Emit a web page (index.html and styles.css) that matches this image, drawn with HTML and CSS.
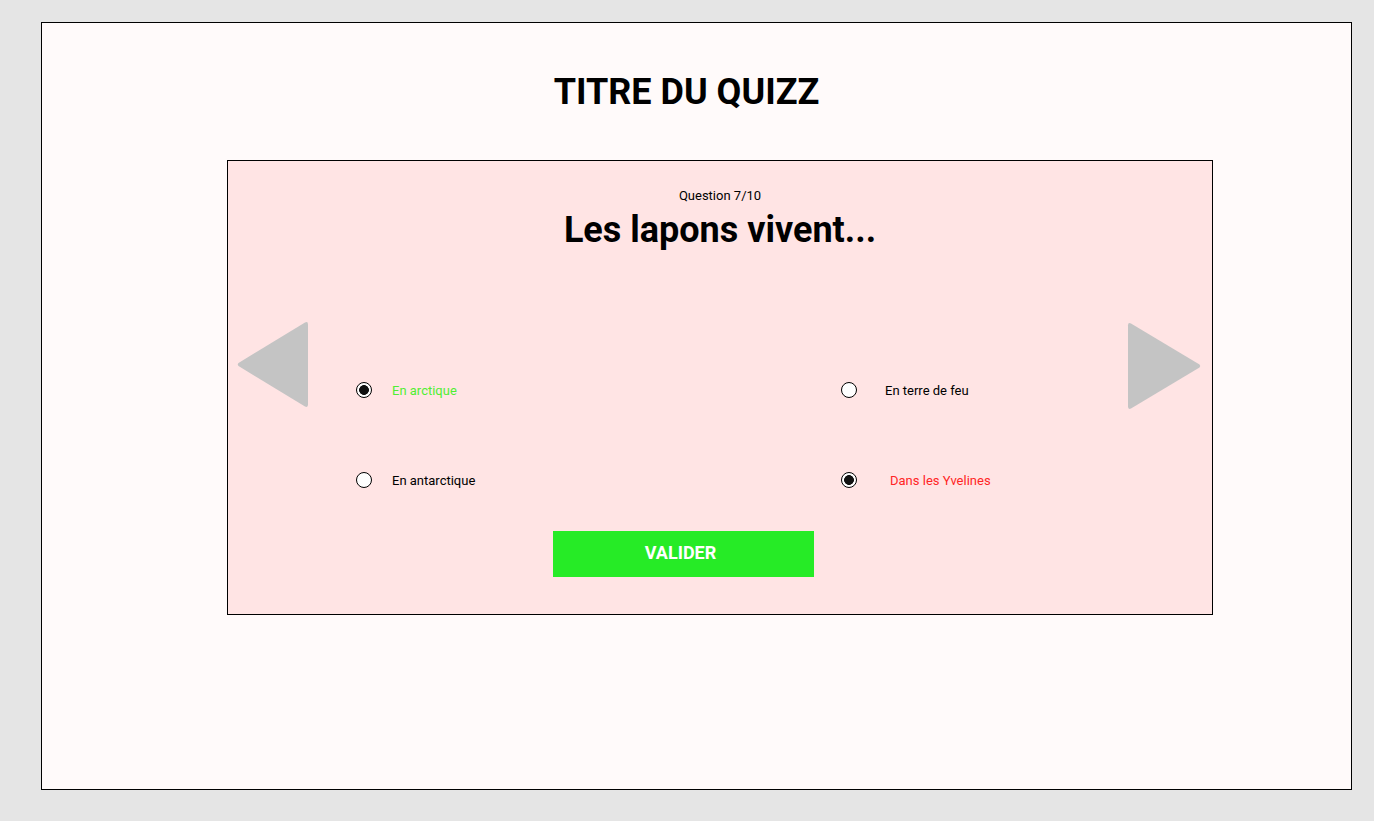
FILE: index.html
```html
<!DOCTYPE html>
<html lang="fr">
<head>
<meta charset="utf-8">
<title>Titre du quizz</title>
<link rel="stylesheet" href="styles.css">
</head>
<body>
<div class="frame">
  <h1 class="title">TITRE DU QUIZZ</h1>
  <section class="card">
    <div class="q-num">Question 7/10</div>
    <h2 class="q-title">Les lapons vivent...</h2>
    <div class="body">
      <svg class="arrow arrow-left" width="72" height="87" viewBox="0 0 72 87">
        <path d="M68 1.5 Q71 0 71 3.5 L71 83.5 Q71 87 68 85.5 L1.5 45 Q0 43.5 1.5 42 Z" fill="#c4c4c4"/>
      </svg>
      <div class="options">
        <label class="opt"><input type="radio" name="a" checked><span class="lbl good">En arctique</span></label>
        <label class="opt col2"><input type="radio" name="b"><span class="lbl">En terre de feu</span></label>
        <label class="opt"><input type="radio" name="c"><span class="lbl">En antarctique</span></label>
        <label class="opt col2"><input type="radio" name="d" checked><span class="lbl bad">Dans les Yvelines</span></label>
      </div>
      <svg class="arrow arrow-right" width="74" height="88" viewBox="0 0 74 88">
        <path d="M4 1.5 Q1 0 1 3.5 L1 84.5 Q1 88 4 86.5 L72.5 45.5 Q74 44 72.5 42.5 Z" fill="#c4c4c4"/>
      </svg>
    </div>
    <button class="btn" type="button">VALIDER</button>
  </section>
</div>
</body>
</html>
```

FILE: styles.css
```css
html, body {
  margin: 0;
  padding: 0;
}
body {
  background: #e5e5e5;
  font-family: Roboto, "Liberation Sans", sans-serif;
  color: #000;
  padding: 22px 0 0 41px;
  height: 821px;
  box-sizing: border-box;
}
.frame {
  width: 1311px;
  height: 768px;
  box-sizing: border-box;
  border: 1px solid #000;
  background: #fffafa;
  display: flex;
  flex-direction: column;
}
.title {
  margin: 48px 0 0 0;
  padding-right: 20px;
  text-align: center;
  font-size: 36px;
  line-height: 42px;
  font-weight: 700;
}
.card {
  margin: 47px 0 0 185px;
  width: 986px;
  height: 455px;
  box-sizing: border-box;
  border: 1px solid #000;
  background: #ffe4e4;
  display: flex;
  flex-direction: column;
}
.q-num {
  margin-top: 27px;
  text-align: center;
  font-size: 13px;
  line-height: 15px;
}
.q-title {
  margin: 6px 0 0 0;
  text-align: center;
  font-size: 36px;
  line-height: 42px;
  font-weight: 700;
}
.body {
  margin-top: 69px;
  display: flex;
  align-items: flex-start;
  padding: 0 11px 0 9px;
}
.arrow {
  flex: none;
  display: block;
}
.arrow-left {
  margin-top: 1px;
}
.arrow-right {
  margin-top: 2px;
}
.options {
  flex: 1;
  margin: 60px 0 0 47px;
  display: grid;
  grid-template-columns: 485px 1fr;
  row-gap: 70px;
}
.opt {
  display: flex;
  align-items: center;
  height: 20px;
  font-size: 13px;
}
.opt input {
  appearance: none;
  -webkit-appearance: none;
  margin: 0 20px 0 0;
  width: 16px;
  height: 16px;
  box-sizing: border-box;
  border: 1px solid #000;
  border-radius: 50%;
  background: #fff;
  flex: none;
}
.opt input:checked {
  border: 1.5px solid #000;
  background: radial-gradient(circle, #111 0 4.6px, #fff 5.2px);
}
.col2 input {
  margin-right: 28px;
}
.col2 .bad {
  margin-left: 5px;
}
.lbl.good { color: #50ee33; }
.lbl.bad { color: #ff2525; }
.btn {
  margin: 41px 0 0 325px;
  width: 261px;
  height: 46px;
  border: 0;
  background: #26eb26;
  color: #fff;
  font-family: Roboto, "Liberation Sans", sans-serif;
  font-size: 18px;
  font-weight: 700;
  padding: 0 6px 3px 0;
  cursor: pointer;
}
```
